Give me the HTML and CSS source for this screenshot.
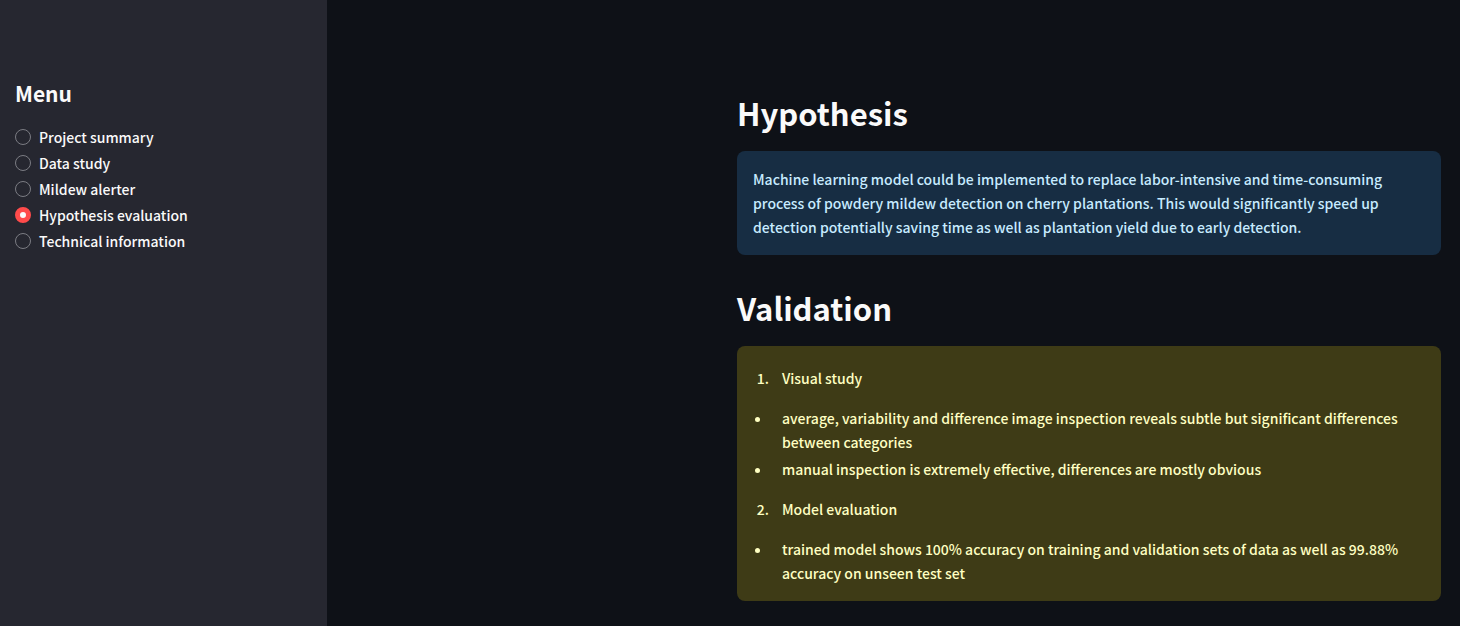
FILE: index.html
```html
<!DOCTYPE html>
<html lang="en">
<head>
<meta charset="utf-8">
<meta name="viewport" content="width=device-width, initial-scale=1">
<title>Hypothesis evaluation</title>
<link rel="stylesheet" href="styles.css">
</head>
<body>
<div class="app">
  <aside class="sidebar">
    <h2 class="menu-title" id="menu-title">Menu</h2>
    <div class="menu" role="radiogroup" aria-labelledby="menu-title">
      <label class="option"><input class="radio" type="radio" name="page"><span>Project summary</span></label>
      <label class="option"><input class="radio" type="radio" name="page"><span>Data study</span></label>
      <label class="option"><input class="radio" type="radio" name="page"><span>Mildew alerter</span></label>
      <label class="option"><input class="radio" type="radio" name="page" checked><span>Hypothesis evaluation</span></label>
      <label class="option"><input class="radio" type="radio" name="page"><span>Technical information</span></label>
    </div>
  </aside>
  <main class="main">
    <div class="content">
      <section class="section">
        <h1 class="title">Hypothesis</h1>
        <div class="alert info">
          <p class="text">Machine learning model could be implemented to replace labor-intensive and time-consuming process of powdery mildew detection on cherry plantations. This would significantly speed up detection potentially saving time as well as plantation yield due to early detection.</p>
        </div>
      </section>
      <section class="section">
        <h1 class="title">Validation</h1>
        <div class="alert warning">
          <ol class="list"><li>Visual study</li></ol>
          <ul class="list">
            <li>average, variability and difference image inspection reveals subtle but significant differences between categories</li>
            <li>manual inspection is extremely effective, differences are mostly obvious</li>
          </ul>
          <ol class="list" start="2"><li>Model evaluation</li></ol>
          <ul class="list">
            <li>trained model shows 100% accuracy on training and validation sets of data as well as 99.88% accuracy on unseen test set</li>
          </ul>
        </div>
      </section>
    </div>
  </main>
</div>
</body>
</html>
```
FILE: styles.css
```css
* {
  box-sizing: border-box;
}

body {
  margin: 0;
  background: #0e1117;
  color: #fafafa;
  font-family: "Source Sans Pro", "Noto Sans CJK SC", sans-serif;
  font-size: 14px;
  font-weight: 500;
  line-height: 24px;
}

.app {
  display: flex;
  min-height: 100vh;
}

.sidebar {
  flex: 0 0 327px;
  padding: 79px 15px 16px;
  background: #262730;
}

.menu-title {
  margin: 0 0 18px;
  font-size: 21px;
  line-height: 28px;
  font-weight: 700;
}

.menu {
  display: flex;
  flex-direction: column;
  gap: 2px;
}

.option {
  display: flex;
  align-items: center;
  gap: 8px;
}

.radio {
  appearance: none;
  flex: none;
  width: 16px;
  height: 16px;
  margin: 0;
  border: 1px solid #7b7c83;
  border-radius: 50%;
}

.radio:checked {
  border: 5px solid #ff4b4b;
  background: #fafafa;
}

.main {
  flex: 1;
  min-width: 0;
  padding: 91px 19px 24px;
}

.content {
  display: flex;
  flex-direction: column;
  gap: 31px;
  max-width: 704px;
  margin-left: auto;
}

.title {
  margin: 0 0 16px;
  font-size: 31px;
  line-height: 44px;
  font-weight: 700;
}

.alert {
  padding: 16px;
  border-radius: 8px;
}

.info {
  background: #172d43;
  color: #c7ebff;
}

.warning {
  display: flex;
  flex-direction: column;
  gap: 16px;
  padding-top: 20px;
  background: #3e3b16;
  color: #ffffc2;
}

.text {
  margin: 0;
}

.list {
  display: flex;
  flex-direction: column;
  gap: 3px;
  margin: 0;
  padding-left: 19px;
}

.list li {
  padding-left: 10px;
}
```
